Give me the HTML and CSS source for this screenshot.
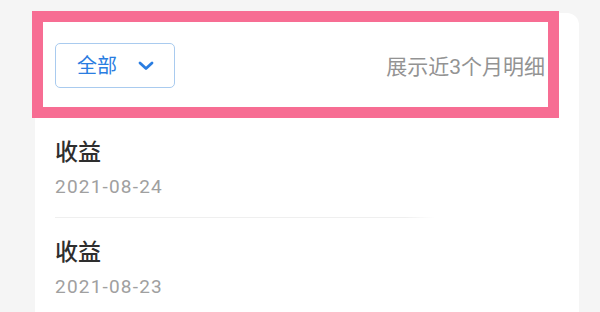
FILE: index.html
```html
<!DOCTYPE html>
<html lang="zh-CN">
<head>
<meta charset="utf-8">
<link rel="stylesheet" href="styles.css">
</head>
<body>
<div class="page">
  <div class="card">
    <div class="header">
      <div class="filter">
        <span class="filter-label">全部</span>
        <svg class="chevron" width="16" height="10" viewBox="0 0 16 10"><path d="M2 2 L8 7.5 L14 2" fill="none" stroke="#2a7de1" stroke-width="2.8" stroke-linecap="round" stroke-linejoin="round"/></svg>
      </div>
      <div class="hint">展示近3个月明细</div>
    </div>
    <div class="item">
      <div class="title">收益</div>
      <div class="date">2021-08-24</div>
    </div>
    <div class="divider"></div>
    <div class="item">
      <div class="title">收益</div>
      <div class="date">2021-08-23</div>
    </div>
  </div>
  <div class="highlight"></div>
</div>
</body>
</html>
```

FILE: styles.css
```css
html, body {
  margin: 0;
  padding: 0;
  background: #f5f5f5;
  font-family: Roboto, "Noto Sans CJK SC", "Noto Sans", sans-serif;
}
.page {
  position: relative;
  width: 600px;
  height: 312px;
  overflow: hidden;
  padding-top: 13px;
  box-sizing: border-box;
}
.card {
  margin-left: 35px;
  width: 544px;
  height: 320px;
  background: #ffffff;
  border-radius: 12px 12px 0 0;
}
.header {
  height: 105px;
  display: flex;
  align-items: center;
  justify-content: space-between;
  padding: 0 34px 0 20px;
}
.filter {
  width: 120px;
  height: 45px;
  box-sizing: border-box;
  border: 1px solid #a9cbef;
  border-radius: 5px;
  display: flex;
  align-items: center;
  padding-left: 21px;
  gap: 21px;
}
.filter-label {
  font-size: 20px;
  color: #2a7de1;
  line-height: 1;
}
.chevron {
  display: block;
}
.hint {
  font-size: 21px;
  color: #939393;
  line-height: 1;
  margin-top: 3px;
}
.item {
  padding: 19px 20px 17px;
}
.title {
  font-size: 23px;
  line-height: 32px;
  color: #2e2e2e;
  font-weight: 500;
}
.date {
  margin-top: 4px;
  font-size: 19px;
  line-height: 27px;
  color: #a0a0a0;
  letter-spacing: 1.2px;
}
.divider {
  margin-left: 20px;
  width: 380px;
  height: 1px;
  background: linear-gradient(to right, #efefef 0, #efefef 92%, rgba(239,239,239,0) 100%);
}
.highlight {
  position: absolute;
  left: 32px;
  top: 11px;
  width: 527px;
  height: 107px;
  box-sizing: border-box;
  border: 11px solid #f76d93;
}
```
